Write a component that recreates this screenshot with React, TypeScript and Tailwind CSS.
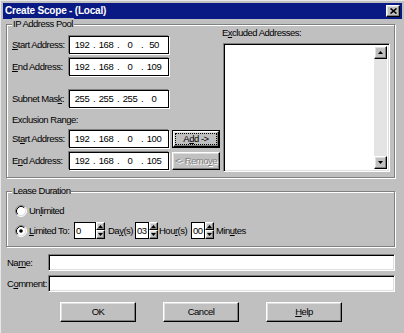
import React from 'react'

const raised =
  'border border-t-white border-l-white border-r-black border-b-black shadow-[inset_-1px_-1px_0_#808080,inset_1px_1px_0_#dfdfdf]'
const sunken =
  'border border-t-[#808080] border-l-[#808080] border-r-white border-b-white shadow-[inset_1px_1px_0_#000,inset_-1px_-1px_0_#dfdfdf]'
const etched = 'border border-[#808080] shadow-[inset_1px_1px_0_#fff,1px_1px_0_#fff]'

function Acc({ text, at }: { text: string; at: number }) {
  return (
    <>
      {text.slice(0, at)}
      <span className="underline underline-offset-[1px]">{text[at]}</span>
      {text.slice(at + 1)}
    </>
  )
}

function Tri({ down }: { down?: boolean }) {
  return (
    <svg width="5" height="3" viewBox="0 0 5 3">
      <path d={down ? 'M0 0 L5 0 L2.5 3Z' : 'M2.5 0 L5 3 L0 3Z'} fill="#000" />
    </svg>
  )
}

function IpBox({ parts }: { parts: string[] }) {
  return (
    <div className="flex h-[18px] w-[100px] items-center border border-black bg-white pl-[2px] shadow-[-1px_-1px_0_#808080,1px_1px_0_#fff]">
      {parts.map((p, i) => (
        <React.Fragment key={i}>
          <span className="w-[20px] text-center">{p}</span>
          {i < 3 && <span className="w-[4px] text-center">.</span>}
        </React.Fragment>
      ))}
    </div>
  )
}

function Field({ label, at, parts, btn }: { label: string; at: number; parts: string[]; btn?: React.ReactNode }) {
  return (
    <div className="flex h-[18px] items-center">
      <span className="w-[57px]">
        <Acc text={label} at={at} />
      </span>
      <IpBox parts={parts} />
      {btn}
    </div>
  )
}

function Radio({ checked }: { checked?: boolean }) {
  return (
    <svg width="12" height="12" viewBox="0 0 12 12">
      <circle cx="6" cy="6" r="5" fill="#fff" />
      <path d="M9.89 2.11 A5.5 5.5 0 0 0 2.11 9.89" stroke="#808080" fill="none" />
      <path d="M2.11 9.89 A5.5 5.5 0 0 0 9.89 2.11" stroke="#fff" fill="none" />
      <path d="M9.18 2.82 A4.5 4.5 0 0 0 2.82 9.18" stroke="#000" fill="none" />
      <path d="M2.82 9.18 A4.5 4.5 0 0 0 9.18 2.82" stroke="#dfdfdf" fill="none" />
      {checked && <circle cx="6" cy="6" r="1.8" fill="#000" />}
    </svg>
  )
}

function Spin() {
  return (
    <div className="flex h-[17px] w-[9px] flex-col">
      <div className={`flex h-[8px] items-center justify-center bg-[#c0c0c0] ${raised}`}>
        <Tri />
      </div>
      <div className={`flex h-[9px] items-center justify-center bg-[#c0c0c0] ${raised}`}>
        <Tri down />
      </div>
    </div>
  )
}

function SpinBox({ value, w }: { value: string; w: string }) {
  return (
    <div className={`flex h-[17px] items-center border border-black bg-white pl-[1px] ${w}`}>{value}</div>
  )
}

function Button({ children }: { children: React.ReactNode }) {
  return (
    <div className={`flex h-[20px] w-[76px] items-center justify-center bg-[#c0c0c0] ${raised}`}>{children}</div>
  )
}

export default function App() {
  return (
    <div className="h-[333px] w-[404px] overflow-hidden whitespace-nowrap border-l border-t border-[#e8e8e8] bg-[#c0c0c0] p-[2px] font-['Liberation_Sans',Arial,sans-serif] text-[9.5px] leading-[12px] tracking-[-0.5px] text-black">
      {/* title bar */}
      <div className="flex h-[16px] items-center justify-between bg-[#0a1a84] pl-[2px] pr-[2px]">
        <span className="text-[10px] font-bold tracking-[-0.2px] text-white">Create Scope - (Local)</span>
        <div className={`flex h-[12px] w-[14px] items-center justify-center bg-[#c0c0c0] ${raised}`}>
          <svg width="7" height="6" viewBox="0 0 7 6">
            <path d="M0.5 0.5 L6.5 5.5 M6.5 0.5 L0.5 5.5" stroke="#000" strokeWidth="1.6" />
          </svg>
        </div>
      </div>

      {/* IP Address Pool */}
      <div className={`relative ml-[3px] mt-[5px] flex h-[154px] w-[389px] ${etched}`}>
        <span className="absolute -top-[7px] left-[5px] bg-[#c0c0c0] px-[1px]">IP Address Pool</span>
        <div className="flex w-[215px] flex-col pl-[5px] pt-[11px]">
          <Field label="Start Address:" at={0} parts={['192', '168', '0', '50']} />
          <div className="mt-[4px]">
            <Field label="End Address:" at={0} parts={['192', '168', '0', '109']} />
          </div>
          <div className="mt-[14px]">
            <Field label="Subnet Mask:" at={10} parts={['255', '255', '255', '0']} />
          </div>
          <div className="mt-[6px] h-[12px]">Exclusion Range:</div>
          <div className="mt-[4px]">
            <Field
              label="Start Address:"
              at={2}
              parts={['192', '168', '0', '100']}
              btn={
                <div className="ml-[3px] h-[18px] w-[48px] border border-black">
                  <div className={`flex h-full w-full items-center justify-center bg-[#c0c0c0] p-[1px] ${raised}`}>
                    <div className="flex h-full w-full items-center justify-center border border-dotted border-black leading-[10px]">
                      <Acc text="Add ->" at={1} />
                    </div>
                  </div>
                </div>
              }
            />
          </div>
          <div className="mt-[4px]">
            <Field
              label="End Address:"
              at={1}
              parts={['192', '168', '0', '105']}
              btn={
                <div
                  className={`ml-[3px] flex h-[18px] w-[48px] items-center justify-center bg-[#c0c0c0] text-[#808080] [text-shadow:1px_1px_0_#fff] ${raised}`}
                >
                  <Acc text="<- Remove" at={7} />
                </div>
              }
            />
          </div>
        </div>
        <div className="flex flex-col pt-[2px]">
          <div className="h-[12px]">
            <Acc text="Excluded Addresses:" at={1} />
          </div>
          <div className={`ml-[1px] mt-[4px] flex h-[129px] w-[167px] justify-end bg-white p-[2px] ${sunken}`}>
            <div className="flex w-[13px] flex-col justify-between bg-[#e4e4e4]">
              <div className={`flex h-[13px] items-center justify-center bg-[#c0c0c0] ${raised}`}>
                <Tri />
              </div>
              <div className={`flex h-[13px] items-center justify-center bg-[#c0c0c0] ${raised}`}>
                <Tri down />
              </div>
            </div>
          </div>
        </div>
      </div>

      {/* Lease Duration */}
      <div className={`relative ml-[3px] mt-[13px] flex h-[56px] w-[389px] flex-col pl-[8px] ${etched}`}>
        <span className="absolute -top-[7px] left-[5px] bg-[#c0c0c0] px-[1px]">Lease Duration</span>
        <div className="mt-[12px] flex h-[14px] items-center gap-[2px]">
          <Radio />
          <span>
            <Acc text="Unlimited" at={2} />
          </span>
        </div>
        <div className="mt-[4px] flex h-[17px] items-center">
          <Radio checked />
          <span className="ml-[2px] w-[45px]">
            <Acc text="Limited To:" at={0} />
          </span>
          <SpinBox value="0" w="w-[22px]" />
          <Spin />
          <span className="w-[30px] pl-[3px]">
            <Acc text="Day(s)" at={2} />
          </span>
          <SpinBox value="03" w="w-[14px]" />
          <Spin />
          <span className="w-[33px] pl-[1px]">
            <Acc text="Hour(s)" at={3} />
          </span>
          <SpinBox value="00" w="w-[14px]" />
          <Spin />
          <span className="pl-[2px]">
            <Acc text="Minutes" at={3} />
          </span>
        </div>
      </div>

      {/* Name / Comment */}
      <div className="mt-[7px] flex h-[17px] items-center pl-[4px]">
        <span className="w-[41px]">
          <Acc text="Name:" at={2} />
        </span>
        <div className={`h-[17px] w-[347px] bg-white ${sunken}`} />
      </div>
      <div className="mt-[4px] flex h-[17px] items-center pl-[4px]">
        <span className="w-[41px]">
          <Acc text="Comment:" at={1} />
        </span>
        <div className={`h-[17px] w-[347px] bg-white ${sunken}`} />
      </div>

      {/* buttons */}
      <div className="ml-[57px] mt-[10px] flex gap-[27px]">
        <Button>OK</Button>
        <Button>Cancel</Button>
        <Button>
          <Acc text="Help" at={0} />
        </Button>
      </div>
    </div>
  )
}
